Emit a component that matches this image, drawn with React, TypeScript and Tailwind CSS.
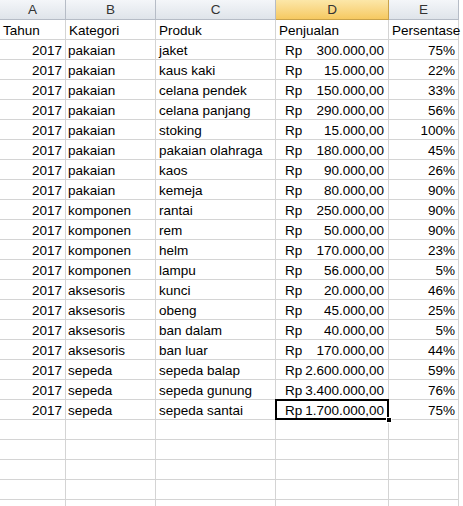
import React from "react";

type Row = [string, string, string, string, string];

const rows: Row[] = [
  ["pakaian", "jaket", "300.000,00", "75%", ""],
  ["pakaian", "kaus kaki", "15.000,00", "22%", ""],
  ["pakaian", "celana pendek", "150.000,00", "33%", ""],
  ["pakaian", "celana panjang", "290.000,00", "56%", ""],
  ["pakaian", "stoking", "15.000,00", "100%", ""],
  ["pakaian", "pakaian olahraga", "180.000,00", "45%", ""],
  ["pakaian", "kaos", "90.000,00", "26%", ""],
  ["pakaian", "kemeja", "80.000,00", "90%", ""],
  ["komponen", "rantai", "250.000,00", "90%", ""],
  ["komponen", "rem", "50.000,00", "90%", ""],
  ["komponen", "helm", "170.000,00", "23%", ""],
  ["komponen", "lampu", "56.000,00", "5%", ""],
  ["aksesoris", "kunci", "20.000,00", "46%", ""],
  ["aksesoris", "obeng", "45.000,00", "25%", ""],
  ["aksesoris", "ban dalam", "40.000,00", "5%", ""],
  ["aksesoris", "ban luar", "170.000,00", "44%", ""],
  ["sepeda", "sepeda balap", "2.600.000,00", "59%", ""],
  ["sepeda", "sepeda gunung", "3.400.000,00", "76%", ""],
  ["sepeda", "sepeda santai", "1.700.000,00", "75%", "sel"],
];

const cell = "h-[20px] border-r border-b border-[#d4d4d4] leading-[21px] overflow-visible whitespace-nowrap";
const head = "h-[20px] border-r border-b border-[#b6bcc6] text-center leading-[20px] text-[#333] bg-gradient-to-b from-[#f4f6f9] to-[#dfe4ea]";

export default function App() {
  return (
    <div className="w-[463px] h-[506px] bg-white overflow-hidden text-[13.5px] text-black" style={{ fontFamily: "'Liberation Sans', Arial, sans-serif" }}>
      <div className="grid grid-cols-[66px_90px_120px_113px_70px]">
        <div className={head}>A</div>
        <div className={head}>B</div>
        <div className={head}>C</div>
        <div className="h-[20px] border-r border-b border-[#c9a24a] text-center leading-[20px] text-[#333] bg-gradient-to-b from-[#fce7a8] to-[#f6c960]">D</div>
        <div className={head}>E</div>

        <div className={`${cell} pl-[3px]`}>Tahun</div>
        <div className={`${cell} pl-[3px]`}>Kategori</div>
        <div className={`${cell} pl-[3px]`}>Produk</div>
        <div className={`${cell} pl-[3px]`}>Penjualan</div>
        <div className={`${cell} pl-[3px] relative z-10`}>Persentase</div>

        {rows.map((r, i) => (
          <React.Fragment key={i}>
            <div className={`${cell} text-right pr-[3px]`}>2017</div>
            <div className={`${cell} pl-[2px]`}>{r[0]}</div>
            <div className={`${cell} pl-[3px]`}>{r[1]}</div>
            <div className={`${cell} relative flex justify-between pl-[9px] pr-[4px]`}>
              <span>Rp</span>
              <span>{r[2]}</span>
              {r[4] === "sel" && (
                <>
                  <div className="absolute -left-[1px] -top-[1px] -right-[1px] -bottom-[1px] border-2 border-black" />
                  <div className="absolute -right-[4px] -bottom-[4px] w-[6px] h-[6px] bg-black border border-white" />
                </>
              )}
            </div>
            <div className={`${cell} text-right pr-[3px]`}>{r[3]}</div>
          </React.Fragment>
        ))}

        {[0, 1, 2, 3, 4].map((i) => (
          <React.Fragment key={"e" + i}>
            <div className={cell} />
            <div className={cell} />
            <div className={cell} />
            <div className={cell} />
            <div className={cell} />
          </React.Fragment>
        ))}
      </div>
    </div>
  );
}
